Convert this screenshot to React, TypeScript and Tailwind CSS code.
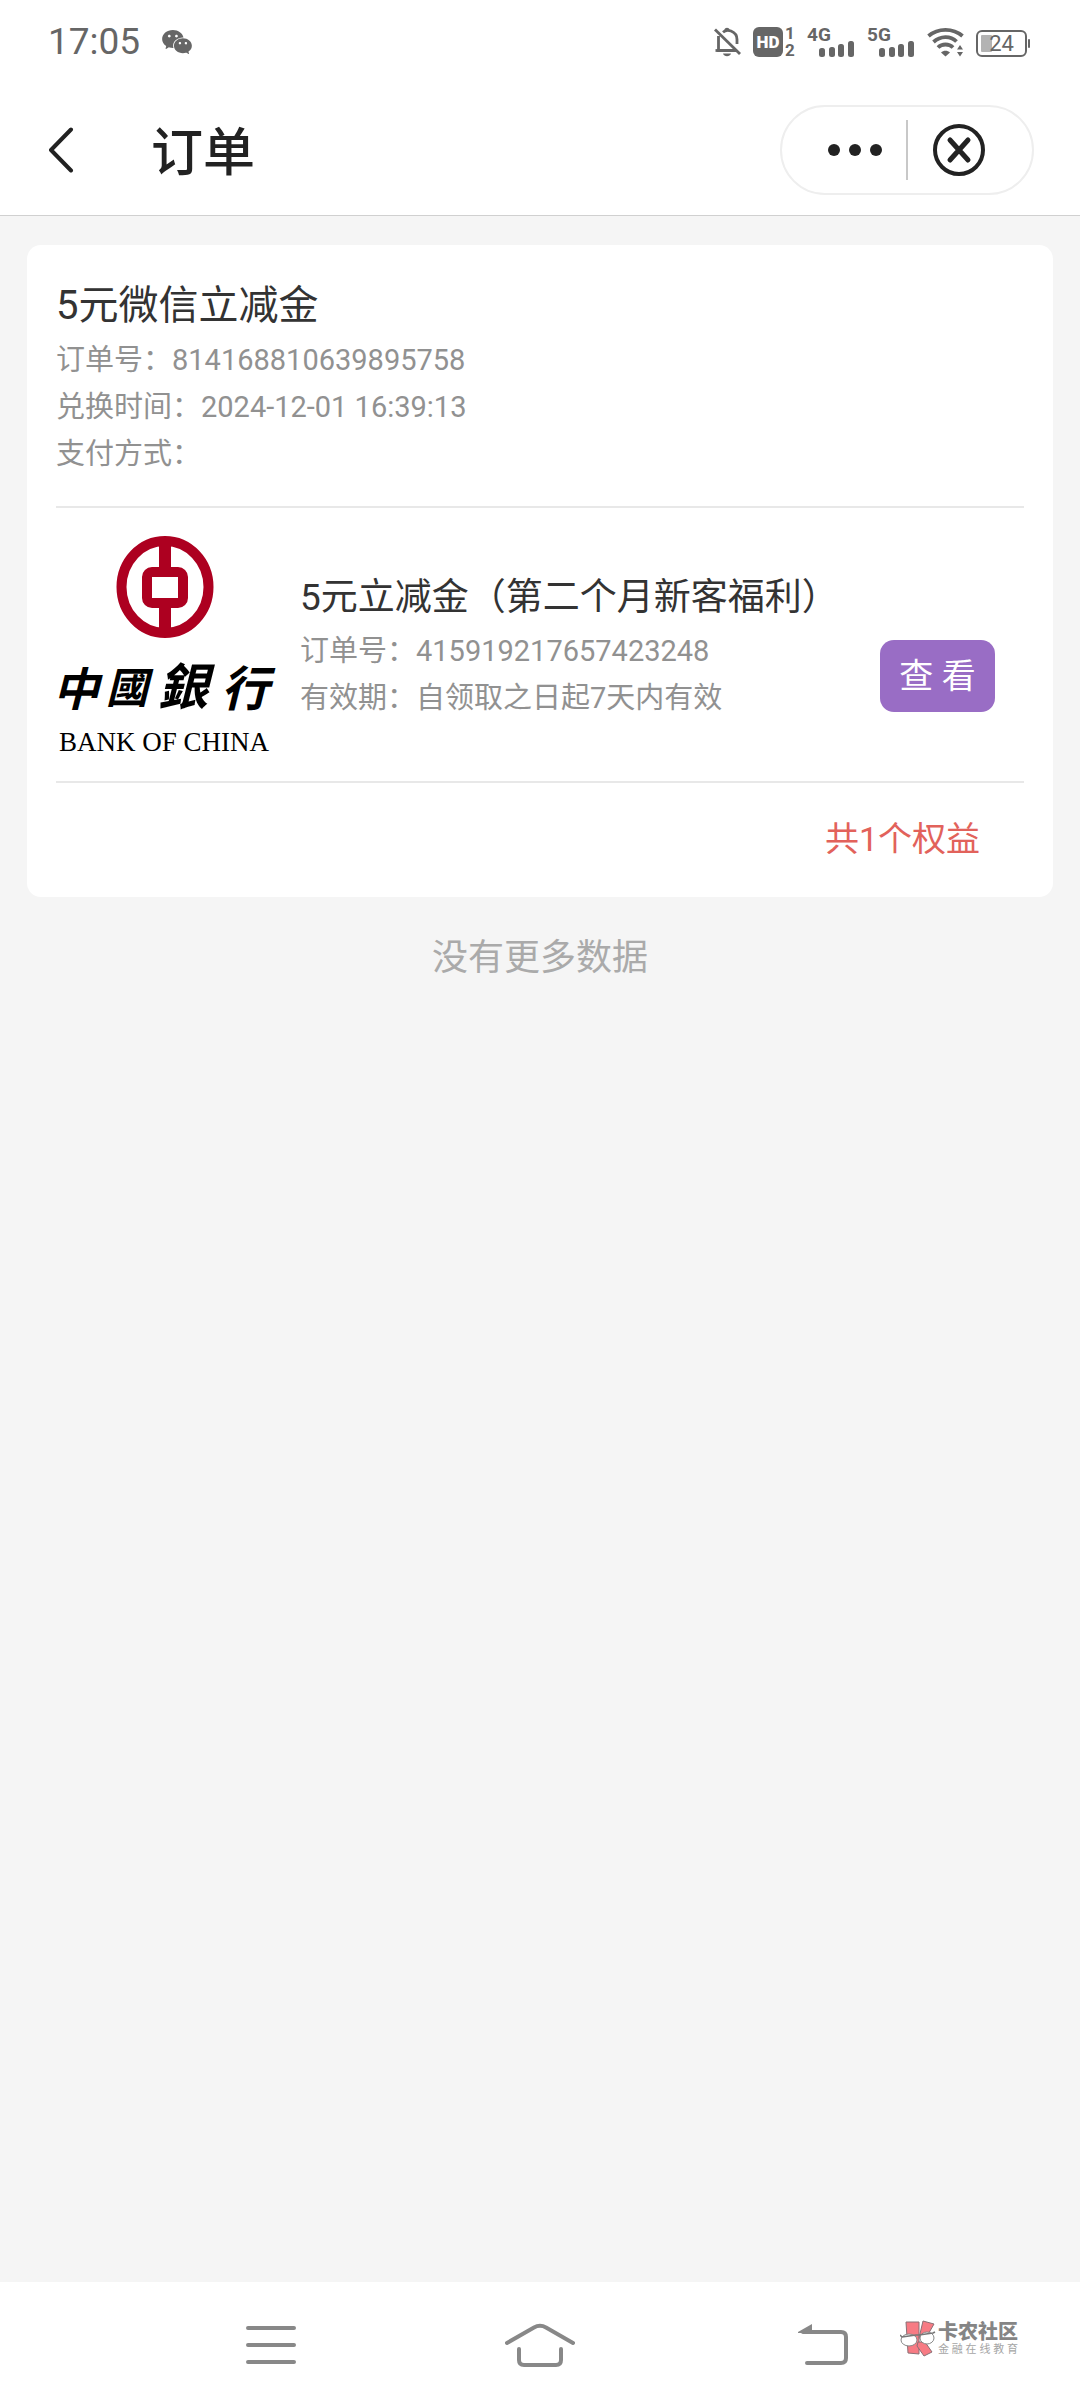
import { AiFillWechat } from 'react-icons/ai';

const order = {
  title: '5元微信立减金',
  rows: ['订单号：814168810639895758', '兑换时间：2024-12-01 16:39:13', '支付方式：'],
};

const benefit = {
  title: '5元立减金（第二个月新客福利）',
  rows: ['订单号：415919217657423248', '有效期：自领取之日起7天内有效'],
};

function BellOffIcon() {
  return (
    <svg width="27" height="30" viewBox="0 0 27 30" fill="none" stroke="currentColor" strokeWidth="2.8">
      <path d="M1 2.5 26 27" />
      <path d="M4.5 9V23.500H22.500" />
      <path d="M9 5.2C11 3.4 14 2.8 17 4c4 1.6 6 4.500 6 8.500V17" />
      <path d="M10.500 3C10.500 0 15.500 0 15.500 3Z" fill="currentColor" stroke="none" />
      <path d="M9 26.500h8c-1 3.500-7 3.500-8 0Z" fill="currentColor" stroke="none" />
      <path d="M1.500 23.500H6" />
    </svg>
  );
}

function HdIcon() {
  return (
    <svg width="42" height="30" viewBox="0 0 42 30" className="overflow-visible font-bold" fill="currentColor">
      <rect width="30" height="30" rx="6" />
      <text x="15" y="21" textAnchor="middle" fontSize="17" fontWeight="900" fill="white">HD</text>
      <text x="37" y="12" textAnchor="middle" fontSize="17">1</text>
      <text x="37" y="29" textAnchor="middle" fontSize="17">2</text>
    </svg>
  );
}

function SignalIcon({ label }: { label: string }) {
  return (
    <svg width="48" height="30" viewBox="0 0 48 30" className="overflow-visible font-bold" fill="currentColor">
      <text x="0" y="14" fontSize="19">{label}</text>
      <rect x="12" y="21" width="6" height="9" rx="2.500" />
      <rect x="22" y="20" width="6" height="10" rx="2.500" />
      <rect x="31" y="17" width="6" height="13" rx="2.500" />
      <rect x="41" y="14" width="6" height="16" rx="2.500" />
    </svg>
  );
}

function WifiIcon() {
  return (
    <svg width="37" height="30" viewBox="0 0 37 30" fill="none" stroke="currentColor" strokeWidth="3.800">
      <path d="M1.500 9C11 .8 26 .8 35.500 9" />
      <path d="M6.500 15C13.500 8.500 23.500 8.500 29.500 14.500" />
      <path d="M11 20.500C15 16.500 22 16.500 26 20.500" />
      <path d="M14 25.500c2.500-2.500 6.500-2.500 9 0l-4.500 4Z" fill="currentColor" stroke="none" />
      <path d="M30 22.500l3-4.500 3 4.500ZM30 25l3 4.500 3-4.500Z" fill="currentColor" stroke="none" />
    </svg>
  );
}

function BatteryIcon() {
  return (
    <svg width="54" height="30" viewBox="0 0 54 30" className="overflow-visible" fill="currentColor">
      <rect x="1" y="4" width="49" height="25" rx="5" fill="none" stroke="currentColor" strokeWidth="2" />
      <rect x="5" y="8" width="11" height="17" rx="1" fill="#b3b3b3" />
      <rect x="52" y="12" width="2" height="9" rx="1" />
      <text x="25.500" y="24" textAnchor="middle" fontSize="22">24</text>
    </svg>
  );
}

function BankLogo() {
  return (
    <svg width="216" height="216" viewBox="0 0 216 216" className="shrink-0 overflow-visible" role="img" aria-label="中國銀行 BANK OF CHINA">
      <g fill="none" stroke="#ad0020">
        <ellipse cx="109" cy="51" rx="43.500" ry="46" strokeWidth="10" />
        <rect x="91" y="36" width="36" height="31" rx="5" strokeWidth="10" />
        <path d="M109 8v24M109 71v23" strokeWidth="12" />
      </g>
      <g fontWeight="700" fontStyle="italic" className="font-['Noto_Sans_CJK_TC',sans-serif]">
        <text x="-3" y="170" fontSize="46">中</text>
        <text x="50" y="167" fontSize="42">國</text>
        <text x="102" y="169" fontSize="50">銀</text>
        <text x="165" y="170" fontSize="48">行</text>
      </g>
      <text x="3" y="215" fontSize="27" className="font-['Liberation_Serif',serif]">BANK OF CHINA</text>
    </svg>
  );
}

function CommunityMark() {
  return (
    <div className="absolute top-[38px] right-[62px] flex items-center gap-[2px]">
      <svg width="36" height="38" viewBox="0 0 36 38" strokeLinejoin="round">
        <g fill="#f77b84" stroke="#8a7076" strokeWidth="1">
          <path d="M6 2h13v32l-11-1Z" />
          <path d="M23 1l11 3-8 14h-7Z" />
          <path d="M18 22h7l7 10-8 4-7-10Z" />
        </g>
        <g fill="white" stroke="#888" strokeWidth="1">
          <ellipse cx="9" cy="20" rx="8" ry="6" />
          <ellipse cx="27" cy="18" rx="7" ry="6" />
        </g>
        <path d="M0 15l2 2 14-2h3l14-2 2-1" fill="none" stroke="#777" strokeWidth="1.500" />
      </svg>
      <div className="text-[#858585]">
        <p className="text-[20px] leading-[22px] font-black">卡农社区</p>
        <p className="flex justify-between text-[11px] leading-[14px] text-[#a5a5a5]">
          {'金融在线教育'.split('').map((char) => (
            <span key={char}>{char}</span>
          ))}
        </p>
      </div>
    </div>
  );
}

function StatusBar() {
  return (
    <div className="flex h-[84px] items-center justify-between pr-[50px] pl-12 text-[#666]">
      <div className="flex items-center gap-5">
        <span className="text-[37px] leading-[50px]">17:05</span>
        <AiFillWechat size={34} />
      </div>
      <div className="flex items-center gap-3">
        <BellOffIcon />
        <HdIcon />
        <SignalIcon label="4G" />
        <SignalIcon label="5G" />
        <WifiIcon />
        <BatteryIcon />
      </div>
    </div>
  );
}

function Header() {
  return (
    <header className="flex h-[132px] items-center border-b border-[#d0d0d0] pr-[46px] pl-12 text-[#222]">
      <button type="button" aria-label="返回">
        <svg width="26" height="46" viewBox="0 0 26 46" fill="none" stroke="currentColor" strokeWidth="4" strokeLinecap="round" strokeLinejoin="round">
          <path d="M23 2.500 3 23l20 20.500" />
        </svg>
      </button>
      <h1 className="ml-[77px] flex-1 pt-2 text-[52px] leading-[72px] font-medium">订单</h1>
      <div className="flex h-[90px] w-[254px] items-center rounded-full border-2 border-[#eee]">
        <button type="button" aria-label="更多" className="flex flex-1 justify-end pr-6">
          <svg width="54" height="12" viewBox="0 0 54 12" fill="currentColor">
            <circle cx="6" cy="6" r="6" />
            <circle cx="27" cy="6" r="6" />
            <circle cx="48" cy="6" r="6" />
          </svg>
        </button>
        <span className="h-[60px] w-[2px] bg-[#c8c8c8]" />
        <button type="button" aria-label="关闭" className="flex flex-1 justify-start pl-6">
          <svg width="54" height="54" viewBox="0 0 54 54" fill="none" stroke="currentColor" strokeWidth="4" strokeLinecap="round">
            <circle cx="27" cy="27" r="24" />
            <path d="M18 17l18 20M36 17 18 37" strokeWidth="5" />
          </svg>
        </button>
      </div>
    </header>
  );
}

function DetailRows({ rows }: { rows: string[] }) {
  return (
    <div className="text-[29px] leading-[47px] text-[#919191]">
      {rows.map((row) => (
        <p key={row}>{row}</p>
      ))}
    </div>
  );
}

function OrderCard() {
  return (
    <section className="rounded-[14px] bg-white px-[29px] text-[#333]">
      <div className="border-b-2 border-[#e8e8e8] pt-[30px] pb-7">
        <h2 className="text-[40px] leading-[62px]">{order.title}</h2>
        <DetailRows rows={order.rows} />
      </div>
      <div className="flex items-center gap-7 border-b-2 border-[#e8e8e8] pt-7 pb-[29px]">
        <BankLogo />
        <div className="flex-1 pt-[2px]">
          <h3 className="text-[37px] leading-[60px]">{benefit.title}</h3>
          <DetailRows rows={benefit.rows} />
        </div>
        <button
          type="button"
          className="mr-[29px] mb-10 h-[72px] w-[115px] shrink-0 self-end rounded-[14px] bg-[#996dc5] text-[34px] leading-[50px] text-white"
        >
          查 看
        </button>
      </div>
      <p className="pt-[31px] pr-11 pb-[33px] text-right text-[34px] leading-[50px] text-[#e2625b]">共1个权益</p>
    </section>
  );
}

function NavBar() {
  return (
    <nav className="relative grid h-[126px] grid-cols-3 items-center justify-items-center bg-white px-[136px] text-[#888]">
      <button type="button" aria-label="最近任务">
        <svg width="50" height="44" viewBox="0 0 50 44" stroke="currentColor" strokeWidth="4" strokeLinecap="round">
          <path d="M2 5h46M2 22h46M2 39h46" />
        </svg>
      </button>
      <button type="button" aria-label="主屏幕">
        <svg width="70" height="44" viewBox="0 0 70 44" fill="none" stroke="currentColor" strokeWidth="4" strokeLinecap="round">
          <path d="M2 20 29 4.500q6-3.500 12 0L68 20" />
          <path d="M14 26v11q0 5 5 5h32q5 0 5-5V26" />
        </svg>
      </button>
      <button type="button" aria-label="返回上一级" className="pl-7">
        <svg width="52" height="44" viewBox="0 0 52 44" fill="none" stroke="currentColor" strokeWidth="4" strokeLinecap="round">
          <path d="M6 9h38q5 0 5 5v21q0 5-5 5H10" />
          <path d="M1 9 15 1v9H1Z" fill="currentColor" stroke="none" />
        </svg>
      </button>
      <CommunityMark />
    </nav>
  );
}

export default function App() {
  return (
    <div className="flex min-h-screen flex-col bg-[#f5f5f5] font-[Roboto,'Noto_Sans_CJK_SC',sans-serif]">
      <div className="bg-white">
        <StatusBar />
        <Header />
      </div>
      <main className="flex-1 px-[27px] pt-[29px]">
        <OrderCard />
        <p className="mt-9 text-center text-[36px] leading-[50px] text-[#aaa]">没有更多数据</p>
      </main>
      <NavBar />
    </div>
  );
}
